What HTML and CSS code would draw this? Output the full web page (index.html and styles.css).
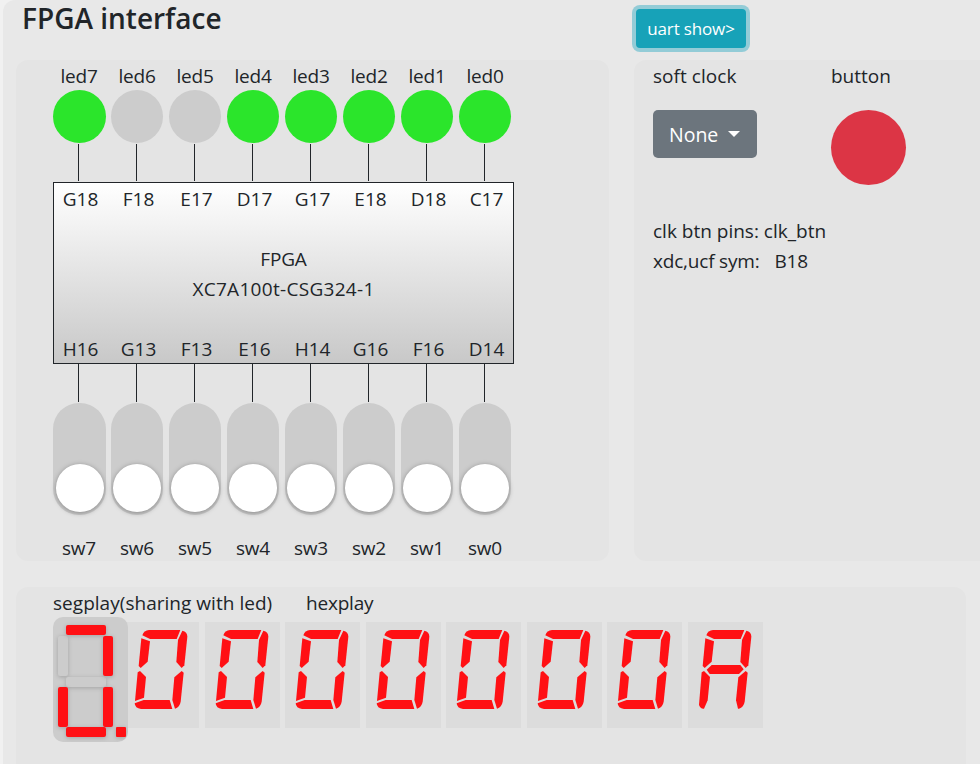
FILE: index.html
```html
<!DOCTYPE html>
<html lang="en">
<head>
<meta charset="utf-8">
<title>FPGA interface</title>
<link rel="stylesheet" href="styles.css">
</head>
<body>
<svg class="defs" width="0" height="0">
  <defs>
    <g id="upper">
      <path d="M55 40Q60 25 75 24H169L158 51H78Z"/>
      <path d="M175 26Q190 29 190 44L181 130 173 138 157 120 162 54Z"/>
      <path d="M52 49L78 58 71 119 50 138 44 132Z"/>
    </g>
    <g id="zero">
      <use href="#upper"/>
      <path d="M48 147L66 165 60 227 33 237 41 151Z"/>
      <path d="M173 147L179 152 170 239Q167 255 153 260L145 234 151 166Z"/>
      <path d="M32 244L59 234H137L145 261H51Q33 259 32 244Z"/>
    </g>
    <g id="hexa">
      <use href="#upper"/>
      <path d="M56 143L71 129H157L167 142 153 156H65Z"/>
      <path d="M48 147L66 165 59 235 48 260Q37 261 33 249L41 151Z"/>
      <path d="M173 147L179 152 170 239Q167 255 153 260L150 260 144 235 151 166Z"/>
    </g>
  </defs>
</svg>
<main class="shell">
  <header class="top">
    <h1>FPGA interface</h1>
    <button class="uart"><span>uart show&gt;</span></button>
  </header>
  <div class="panels">
    <section class="panel board">
      <div class="row names"><span>led7</span><span>led6</span><span>led5</span><span>led4</span><span>led3</span><span>led2</span><span>led1</span><span>led0</span></div>
      <div class="row leds"><i class="on"></i><i></i><i></i><i class="on"></i><i class="on"></i><i class="on"></i><i class="on"></i><i class="on"></i></div>
      <div class="row wires"><i></i><i></i><i></i><i></i><i></i><i></i><i></i><i></i></div>
      <div class="chip">
        <div class="row pins"><span>G18</span><span>F18</span><span>E17</span><span>D17</span><span>G17</span><span>E18</span><span>D18</span><span>C17</span></div>
        <div class="model"><div>FPGA</div><div class="part">XC7A100t-CSG324-1</div></div>
        <div class="row pins"><span>H16</span><span>G13</span><span>F13</span><span>E16</span><span>H14</span><span>G16</span><span>F16</span><span>D14</span></div>
      </div>
      <div class="row wires low"><i></i><i></i><i></i><i></i><i></i><i></i><i></i><i></i></div>
      <div class="row switches"><b><i></i></b><b><i></i></b><b><i></i></b><b><i></i></b><b><i></i></b><b><i></i></b><b><i></i></b><b><i></i></b></div>
      <div class="row names"><span>sw7</span><span>sw6</span><span>sw5</span><span>sw4</span><span>sw3</span><span>sw2</span><span>sw1</span><span>sw0</span></div>
    </section>
    <section class="panel side">
      <div class="controls">
        <div class="clock"><div class="t-clock">soft clock</div><button class="select"><span>None</span><i></i></button></div>
        <div><div class="t-button">button</div><button class="push" aria-label="button"></button></div>
      </div>
      <div class="info">
        <div class="t-pins">clk btn pins: clk_btn</div>
        <div class="sym"><span class="t-sym">xdc,ucf sym:</span><span>B18</span></div>
      </div>
    </section>
  </div>
  <section class="panel display">
    <div class="captions"><span class="seg-cap">segplay(sharing with led)</span><span class="hex-cap">hexplay</span></div>
    <div class="digits">
      <svg class="seg" viewBox="0 0 75 125">
        <g class="off"><rect x="5" y="19" width="10" height="40" rx="2"/><rect x="13" y="60" width="40" height="10" rx="2"/></g>
        <g class="lit"><rect x="13" y="8" width="40" height="10" rx="2"/><rect x="50" y="19" width="10" height="40" rx="2"/><rect x="5" y="70" width="10" height="40" rx="2"/><rect x="50" y="70" width="10" height="40" rx="2"/><rect x="13" y="110" width="40" height="10" rx="2"/><rect x="63" y="110" width="10" height="10" rx="1"/></g>
      </svg>
      <div class="hex">
        <svg viewBox="0 0 225 318"><use href="#zero"/></svg>
        <svg viewBox="0 0 225 318"><use href="#zero"/></svg>
        <svg viewBox="0 0 225 318"><use href="#zero"/></svg>
        <svg viewBox="0 0 225 318"><use href="#zero"/></svg>
        <svg viewBox="0 0 225 318"><use href="#zero"/></svg>
        <svg viewBox="0 0 225 318"><use href="#zero"/></svg>
        <svg viewBox="0 0 225 318"><use href="#zero"/></svg>
        <svg viewBox="0 0 225 318"><use href="#hexa"/></svg>
      </div>
    </div>
  </section>
</main>
</body>
</html>
```
FILE: styles.css
```css
* { box-sizing: border-box; }
html, body { height: 764px; overflow: hidden; }
body {
  margin: 0;
  background: #f1f1f1;
  color: #212529;
  font: 19px/30px "Open Sans", "Noto Sans", sans-serif;
  letter-spacing: -0.2px;
}
.defs { display: block; height: 0; }
button { border: 0; padding: 0; font: inherit; letter-spacing: inherit; color: #fff; }
.shell {
  width: 1010px;
  height: 784px;
  margin-left: 3px;
  padding-left: 13px;
  background: #e8e8e8;
  border-radius: 12px 0 0 0;
}
.top { display: flex; height: 60px; }
h1 {
  width: 620px;
  margin: 0;
  padding: 0 0 0 6px;
  font-size: 28px;
  line-height: 36px;
  font-weight: 600;
  letter-spacing: 0;
}
.uart {
  width: 110px;
  height: 39px;
  margin-top: 9px;
  background: #17a2b8;
  border-radius: 4px;
  box-shadow: 0 0 0 4px #93ccd7;
  font-size: 17px;
  letter-spacing: -0.15px;
}
.panels { display: flex; gap: 25px; height: 501px; margin-bottom: 26px; }
.panel { background: #e4e4e4; border-radius: 12px; }
.board { width: 593px; padding-left: 37px; }
.row { display: grid; grid-template-columns: repeat(8, 53px); column-gap: 5px; }
.names, .pins { text-align: center; white-space: nowrap; }
.names { padding-top: 1px; }
.names span { margin-right: 1px; }
.row > i { display: block; }
.leds { margin-top: -1px; }
.leds i { width: 52px; height: 53px; border-radius: 50%; background: #ccc; }
.leds .on { background: #2be52b; }
.leds i:first-child { width: 53px; }
.wires { height: 37px; margin: 1px 0; }
.wires i { width: 1px; height: 100%; margin-left: 25px; background: #212529; }
.wires.low { height: 38px; margin-top: 0; }
.chip {
  display: flex;
  flex-direction: column;
  justify-content: space-between;
  width: 461px;
  height: 182px;
  padding-top: 1px;
  border: 1px solid #212529;
  background: linear-gradient(#fff, #c8c8c8);
}
.chip .pins:last-child { margin-bottom: -1px; }
.pins { letter-spacing: 0; }
.model { text-align: center; }
.part { letter-spacing: 0.3px; }
.switches { height: 112px; margin-bottom: 17px; }
.switches b { width: 52px; padding: 61px 0 0 2px; border-radius: 26px; background: #ccc; }
.switches b:first-child { width: 53px; padding-left: 3px; }
.switches i { display: block; width: 48px; height: 47.5px; border-radius: 50%; background: #fff; box-shadow: 0 1px 5px rgba(0,0,0,.35); }
.side { flex: 1; padding-left: 19px; }
.controls { display: flex; height: 156px; padding-top: 1px; }
.clock { width: 178px; }
.t-clock { letter-spacing: 0.05px; }
.t-button { letter-spacing: 0; }
.t-pins { letter-spacing: 0; }
.select {
  display: flex;
  align-items: center;
  width: 104px;
  height: 48px;
  margin-top: 19px;
  padding: 2px 0 0 16px;
  border-radius: 5px;
  background: #6c757d;
  font-size: 19.5px;
  letter-spacing: 0;
}
.select i { margin: -3px 0 0 10px; border: 6px solid transparent; border-top-color: #fff; border-bottom: 0; }
.push { display: block; width: 75px; height: 75px; margin-top: 19px; border-radius: 50%; background: #dc3545; }
.sym { display: flex; gap: 15px; }
.display { width: 950px; height: 190px; padding-left: 37px; }
.captions { display: flex; height: 30px; padding-top: 1px; }
.seg-cap { width: 253px; white-space: nowrap; letter-spacing: 0.03px; }
.digits { display: flex; }
.seg { position: relative; z-index: 1; width: 75px; height: 125px; border-radius: 10px; background: #ccc; }
.seg g { filter: drop-shadow(0 1px 2px rgba(0,0,0,.2)); }
.off { fill: #ccc; }
.lit { fill: #ff1014; }
.hex { display: flex; gap: 5.5px; margin: 5px 0 0 -3.9px; }
.hex svg { width: 75px; height: 106px; background: #dcdcdc; fill: #ff1014; }
```
